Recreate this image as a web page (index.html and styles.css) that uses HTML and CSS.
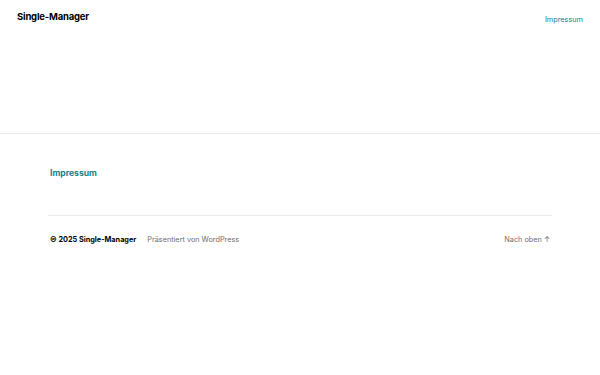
FILE: index.html
```html
<!DOCTYPE html>
<html lang="de">
<head>
    <meta charset="UTF-8">
    <meta name="viewport" content="width=device-width, initial-scale=1.0">
    <title>Single-Manager</title>
    <link rel="stylesheet" href="styles.css">
</head>
<body>

    <header class="site-header">
        <a class="site-title" href="#">Single-Manager</a>
        <nav class="site-nav">
            <a href="#">Impressum</a>
        </nav>
    </header>

    <main class="site-main"></main>

    <footer class="site-footer">
        <div class="footer-inner">
            <nav class="footer-nav">
                <a href="#">Impressum</a>
            </nav>
            <div class="footer-bottom">
                <div class="footer-credits">
                    <span class="copyright">&copy; 2025 Single-Manager</span>
                    <span class="powered">Präsentiert von WordPress</span>
                </div>
                <a class="to-top" href="#">Nach oben <span class="arrow">&uarr;</span></a>
            </div>
        </div>
    </footer>

</body>
</html>
```

FILE: styles.css
```css
body {
    margin: 0;
    padding: 0;
    background-color: #FFFFFF;
    font-family: 'Inter', 'Noto Sans', sans-serif;
    color: #000000;
}

a {
    text-decoration: none;
}

.site-header {
    display: flex;
    justify-content: space-between;
    align-items: center;
    padding: 10px 17px;
    height: 12px;
}

.site-title {
    font-size: 9.5px;
    font-weight: 700;
    color: #000000;
    letter-spacing: -0.2px;
}

.site-nav a {
    font-size: 7.3px;
    color: #1A8087;
}

.site-main {
    height: 101px;
}

.site-footer {
    border-top: 1px solid #EAEAEA;
}

.footer-inner {
    margin: 0 48px;
    padding-top: 30px;
}

.footer-nav {
    padding: 0 2px 36px;
    border-bottom: 1px solid #EAEAEA;
    line-height: 12px;
}

.footer-nav a {
    font-size: 8.6px;
    font-weight: 700;
    color: #1A8087;
}

.footer-bottom {
    display: flex;
    justify-content: space-between;
    align-items: center;
    padding: 19px 2px 0;
    font-size: 7.3px;
}

.footer-credits {
    display: flex;
    gap: 11px;
}

.copyright {
    font-weight: 700;
    color: #000000;
}

.powered {
    color: #6E6E6E;
}

.to-top {
    color: #6E6E6E;
}
```
